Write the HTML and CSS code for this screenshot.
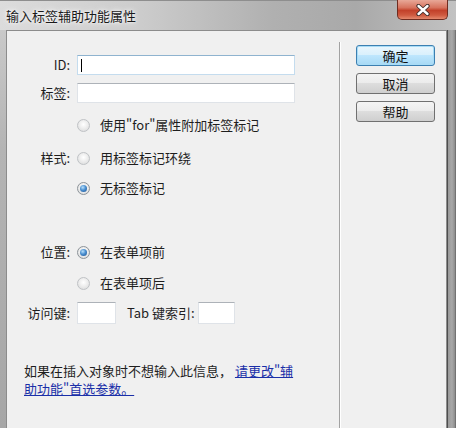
FILE: index.html
```html
<!DOCTYPE html>
<html lang="zh-CN">
<head>
<meta charset="UTF-8">
<meta name="viewport" content="width=device-width, initial-scale=1.0">
<title>输入标签辅助功能属性</title>
<link rel="stylesheet" href="styles.css">
</head>
<body>
  <div class="window">
    <div class="titlebar">
      <span class="title">输入标签辅助功能属性</span>
      <div class="close">
        <svg width="14" height="12" viewBox="0 0 14 12">
          <path d="M2.5 2 L11.5 10 M11.5 2 L2.5 10" stroke="#3a2a28" stroke-width="4.2" stroke-linecap="round"/>
          <path d="M2.5 2 L11.5 10 M11.5 2 L2.5 10" stroke="#ffffff" stroke-width="2.4" stroke-linecap="round"/>
        </svg>
      </div>
    </div>
    <div class="frame">
      <div class="client">
        <div class="form">
          <div class="row row-id">
            <span class="label">ID:</span>
            <div class="textbox focused"><span class="caret"></span></div>
          </div>
          <div class="row row-tag">
            <span class="label">标签:</span>
            <div class="textbox"></div>
          </div>
          <div class="row row-r1">
            <span class="label"></span>
            <span class="radio"></span>
            <span>使用"for"属性附加标签标记</span>
          </div>
          <div class="row row-r2">
            <span class="label">样式:</span>
            <span class="radio"></span>
            <span>用标签标记环绕</span>
          </div>
          <div class="row row-r3">
            <span class="label"></span>
            <span class="radio checked"></span>
            <span>无标签标记</span>
          </div>
          <div class="row row-r4">
            <span class="label">位置:</span>
            <span class="radio checked"></span>
            <span>在表单项前</span>
          </div>
          <div class="row row-r5">
            <span class="label"></span>
            <span class="radio"></span>
            <span>在表单项后</span>
          </div>
          <div class="row row-keys">
            <span class="label">访问键:</span>
            <div class="textbox small"></div>
            <span class="tab-label">Tab 键索引:</span>
            <div class="textbox tiny"></div>
          </div>
          <p class="note">如果在插入对象时不想输入此信息， <a href="#">请更改"辅<br>助功能"首选参数。</a></p>
        </div>
        <div class="buttons">
          <button class="btn default">确定</button>
          <button class="btn">取消</button>
          <button class="btn">帮助</button>
        </div>
      </div>
    </div>
  </div>
</body>
</html>
```

FILE: styles.css
```css
body {
  margin: 0;
  padding: 0;
  font-family: "Noto Sans CJK SC", "Liberation Sans", sans-serif;
  font-size: 13px;
  color: #1e1e1e;
  background-color: #b8b8b8;
}

.window {
  width: 456px;
  height: 428px;
  overflow: hidden;
  display: flex;
  flex-direction: column;
}

.titlebar {
  height: 30px;
  display: flex;
  align-items: flex-start;
  justify-content: space-between;
  background: linear-gradient(to right, #dcdcdc 0%, #cdcdcd 30%, #b0b0b0 60%, #a9a9a9 78%, #c2c2c2 100%);
  border-top: 1px solid #8e8e8e;
  box-sizing: border-box;
}

.title {
  margin: 6px 0 0 6px;
  line-height: 18px;
  color: #1a1a1a;
  text-shadow: 0 0 6px #ffffff, 0 0 3px #ffffff;
}

.close {
  width: 49px;
  height: 19px;
  margin-right: 8px;
  margin-top: -1px;
  border: 1px solid #6f2c20;
  border-top: none;
  border-radius: 0 0 5px 5px;
  background: linear-gradient(to bottom, #e8a898 0%, #d7735e 40%, #c2412a 55%, #cf5a40 80%, #e48a6e 100%);
  display: flex;
  align-items: center;
  justify-content: center;
}

.frame {
  flex: 1;
  display: flex;
  padding: 0 9px 0 6px;
  background: linear-gradient(to bottom, #c9c9c9, #b4b4b4 30%, #a6a6a6);
  position: relative;
}

.frame::after {
  content: "";
  position: absolute;
  top: 0;
  bottom: 0;
  right: 0;
  width: 9px;
  background: linear-gradient(to right, #4e4e4e 0, #4e4e4e 1px, #9a9a9a 1px, #a8a8a8 5px, #8c8c8c 8px, #5a5a5a 9px);
}

.client {
  flex: 1;
  display: flex;
  background-color: #f0f0f0;
  border: 1px solid #8c8c8c;
  border-bottom: none;
}

.form {
  box-sizing: border-box;
  width: 333px;
  margin-top: 11px;
  padding-top: 13px;
  border-right: 1px solid #a2a2a2;
  box-shadow: 1px 0 0 #ffffff;
}

.row {
  display: flex;
  align-items: center;
  height: 20px;
  line-height: 16px;
}

.label {
  width: 63px;
  margin-right: 7px;
  text-align: right;
  flex-shrink: 0;
}

.row-tag { margin-top: 8px; }
.row-r1 { margin-top: 12px; }
.row-r2 { margin-top: 13px; }
.row-r3 { margin-top: 10px; }
.row-r4 { margin-top: 44px; }
.row-r5 { margin-top: 11px; }
.row-keys { margin-top: 9px; height: 22px; }

.textbox {
  box-sizing: border-box;
  width: 218px;
  height: 20px;
  background-color: #ffffff;
  border: 1px solid #dfe3e8;
  border-top-color: #adb2b8;
  display: flex;
  align-items: center;
}

.textbox.focused {
  border-color: #c4dcee;
  border-top-color: #8fb3cf;
}

.textbox.small {
  width: 39px;
  height: 22px;
}

.textbox.tiny {
  width: 37px;
  height: 22px;
  margin-left: 3px;
}

.caret {
  width: 1px;
  height: 13px;
  margin-left: 3px;
  background-color: #000000;
}

.tab-label {
  margin-left: 11px;
}

.radio {
  box-sizing: border-box;
  width: 13px;
  height: 13px;
  margin-right: 10px;
  border-radius: 50%;
  border: 1px solid #bfc2c5;
  background: radial-gradient(circle at 50% 40%, #ffffff 0%, #eeeeee 45%, #d6d7d8 100%);
  display: flex;
  align-items: center;
  justify-content: center;
}

.radio.checked {
  border-color: #8d9399;
}

.radio.checked::after {
  content: "";
  width: 7px;
  height: 7px;
  border-radius: 50%;
  background: radial-gradient(circle at 40% 35%, #b9e0fb 0%, #4a8fd0 45%, #1a4f8e 100%);
}

.note {
  margin: 38px 0 0 17px;
  line-height: 18px;
}

.note a {
  color: #1a2fa8;
  text-decoration: underline;
}

.buttons {
  padding: 14px 0 0 16px;
  display: flex;
  flex-direction: column;
  gap: 7px;
}

.btn {
  width: 79px;
  height: 21px;
  padding: 0;
  font-family: "Noto Sans CJK SC", "Liberation Sans", sans-serif;
  font-size: 13px;
  line-height: 17px;
  color: #111111;
  border: 1px solid #707070;
  border-radius: 3px;
  background: linear-gradient(to bottom, #f4f4f4 0%, #ebebeb 48%, #dddddd 50%, #cfcfcf 100%);
}

.btn.default {
  border-color: #3c7fb1;
  box-shadow: inset 0 0 0 1px #a8dcf6;
  background: linear-gradient(to bottom, #eaf6fd 0%, #d9f0fc 48%, #bee6fd 50%, #a7d9f5 100%);
}
```
